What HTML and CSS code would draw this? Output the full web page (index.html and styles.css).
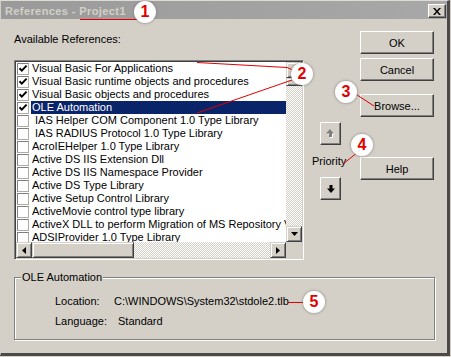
FILE: index.html
```html
<!DOCTYPE html>
<html>
<head>
<meta charset="utf-8">
<title>References - Project1</title>
<link rel="stylesheet" href="styles.css">
</head>
<body>
<div class="window">
  <div class="titlebar">
    <span class="title">References - Project1</span>
    <button class="close"><svg width="8" height="7" viewBox="0 0 8 7"><path d="M0 0h2l2 2.5 2-2.5h2l-3 3.5 3 3.5h-2l-2-2.5-2 2.5h-2l3-3.5z" fill="#000"/></svg></button>
  </div>
  <div class="main">
    <div class="leftcol">
      <div class="label">Available References:</div>
      <div class="listbox">
        <div class="listarea">
          <div class="items">
            <div class="row"><span class="cb"><svg width="10" height="10" viewBox="0 0 10 10"><path d="M1.5 4.2 L3.8 6.6 L8.6 1.6" fill="none" stroke="#000" stroke-width="2"/></svg></span><span class="txt">Visual Basic For Applications</span></div>
            <div class="row"><span class="cb"><svg width="10" height="10" viewBox="0 0 10 10"><path d="M1.5 4.2 L3.8 6.6 L8.6 1.6" fill="none" stroke="#000" stroke-width="2"/></svg></span><span class="txt">Visual Basic runtime objects and procedures</span></div>
            <div class="row"><span class="cb"><svg width="10" height="10" viewBox="0 0 10 10"><path d="M1.5 4.2 L3.8 6.6 L8.6 1.6" fill="none" stroke="#000" stroke-width="2"/></svg></span><span class="txt">Visual Basic objects and procedures</span></div>
            <div class="row"><span class="cb"><svg width="10" height="10" viewBox="0 0 10 10"><path d="M1.5 4.2 L3.8 6.6 L8.6 1.6" fill="none" stroke="#000" stroke-width="2"/></svg></span><span class="txt sel">OLE Automation</span></div>
            <div class="row"><span class="cb"></span><span class="txt sp">IAS Helper COM Component 1.0 Type Library</span></div>
            <div class="row"><span class="cb"></span><span class="txt sp">IAS RADIUS Protocol 1.0 Type Library</span></div>
            <div class="row"><span class="cb"></span><span class="txt">AcroIEHelper 1.0 Type Library</span></div>
            <div class="row"><span class="cb"></span><span class="txt">Active DS IIS Extension Dll</span></div>
            <div class="row"><span class="cb"></span><span class="txt">Active DS IIS Namespace Provider</span></div>
            <div class="row"><span class="cb"></span><span class="txt">Active DS Type Library</span></div>
            <div class="row"><span class="cb"></span><span class="txt">Active Setup Control Library</span></div>
            <div class="row"><span class="cb"></span><span class="txt">ActiveMovie control type library</span></div>
            <div class="row"><span class="cb"></span><span class="txt">ActiveX DLL to perform Migration of MS Repository V1</span></div>
            <div class="row"><span class="cb"></span><span class="txt">ADSIProvider 1.0 Type Library</span></div>
          </div>
          <div class="vscroll">
            <div class="sbtn"><svg width="7" height="4" viewBox="0 0 7 4"><path d="M3.5 0 L7 4 L0 4 Z" fill="#000"/></svg></div>
            <div class="thumb-v"></div>
            <div class="track"></div>
            <div class="sbtn"><svg width="7" height="4" viewBox="0 0 7 4"><path d="M0 0 L7 0 L3.5 4 Z" fill="#000"/></svg></div>
          </div>
        </div>
        <div class="hscroll">
          <div class="sbtn"><svg width="4" height="7" viewBox="0 0 4 7"><path d="M4 0 L4 7 L0 3.5 Z" fill="#000"/></svg></div>
          <div class="thumb-h"></div>
          <div class="track"></div>
          <div class="sbtn"><svg width="4" height="7" viewBox="0 0 4 7"><path d="M0 0 L4 3.5 L0 7 Z" fill="#000"/></svg></div>
          <div class="corner"></div>
        </div>
      </div>
    </div>
    <div class="midcol">
      <button class="pbtn up"><svg width="9" height="9" viewBox="0 0 9 9"><path d="M5 1 L9 5.5 L7 5.5 L7 9 L4 9 L4 5.5 L1 5.5 Z" fill="#fff"/><path d="M4 0 L8 4.5 L6 4.5 L6 8 L3 8 L3 4.5 L0 4.5 Z" fill="#808080"/></svg></button>
      <div class="priority">Priority</div>
      <button class="pbtn down"><svg width="8" height="8" viewBox="0 0 8 8"><path d="M2.5 0 L5.5 0 L5.5 3.5 L8 3.5 L4 8 L0 3.5 L2.5 3.5 Z" fill="#000"/></svg></button>
    </div>
    <div class="rightcol">
      <button class="btn ok">OK</button>
      <button class="btn cancel">Cancel</button>
      <button class="btn browse">Browse...</button>
      <button class="btn help">Help</button>
    </div>
  </div>
  <fieldset class="group">
    <legend>OLE Automation</legend>
    <div class="info">
      <span>Location:</span><span>C:\WINDOWS\System32\stdole2.tlb</span>
      <span>Language:</span><span class="std">Standard</span>
    </div>
  </fieldset>
</div>
<svg class="annot" width="451" height="357" viewBox="0 0 451 357">
  <g stroke="#e00000" stroke-width="1" fill="none">
    <path d="M80 19.5 H137"/>
    <path d="M197 62.5 L287 67.5 L293 70"/>
    <path d="M197 113 L292 80"/>
    <path d="M354 93 L374 106"/>
    <path d="M358 152 L343 164"/>
    <path d="M288 302.5 H304"/>
  </g>
</svg>
<div class="badge b1">1</div>
<div class="badge b2">2</div>
<div class="badge b3">3</div>
<div class="badge b4">4</div>
<div class="badge b5">5</div>
</body>
</html>
```

FILE: styles.css
```css
html, body {
  margin: 0;
  padding: 0;
}
body {
  background: #d4d0c8;
  font-family: "Liberation Sans", Arial, sans-serif;
  font-size: 11px;
  color: #000;
  width: 451px;
  height: 357px;
  overflow: hidden;
  position: relative;
}
.window {
  width: 450px;
  height: 356px;
  box-sizing: border-box;
  background: #d4d0c8;
  border-top: 1px solid #dedbd5;
  border-left: 1px solid #d4d0c8;
  border-right: 3px solid #4a4a4a;
  border-bottom: 3px solid #4a4a4a;
}
.titlebar {
  height: 18px;
  display: flex;
  justify-content: space-between;
  align-items: flex-start;
  background: linear-gradient(to right, #9a9a9a, #a8a8a8);
}
.title {
  font-weight: bold;
  color: #d4d0c8;
  line-height: 13px;
  letter-spacing: 0.4px;
  margin: 4px 0 0 4px;
}
.close {
  width: 18px;
  height: 14px;
  margin: 3px 1px 0 0;
  padding: 0;
  background: #d4d0c8;
  border: 1px solid;
  border-color: #fff #404040 #404040 #fff;
  box-shadow: inset -1px -1px 0 #808080;
  display: flex;
  align-items: center;
  justify-content: center;
}
.main {
  display: flex;
  padding-left: 13px;
}
.leftcol {
  width: 290px;
}
.label {
  line-height: 13px;
  margin-top: 14px;
}
.listbox {
  margin-top: 14px;
  width: 290px;
  height: 200px;
  box-sizing: border-box;
  border: 1px solid;
  border-color: #808080 #fff #fff #808080;
  box-shadow: inset 1px 1px 0 #404040, inset -1px -1px 0 #d4d0c8;
  padding: 1px;
  background: #fff;
  display: flex;
  flex-direction: column;
}
.listarea {
  display: flex;
  height: 180px;
}
.items {
  flex: 1;
  overflow: hidden;
}
.row {
  height: 13px;
  display: flex;
  align-items: center;
  white-space: nowrap;
}
.cb {
  width: 12px;
  height: 12px;
  box-sizing: border-box;
  margin-left: 1px;
  border: 1px solid;
  border-color: #808080 #b0aca4 #b0aca4 #808080;
  background: #fff;
  flex: none;
  display: flex;
  align-items: center;
  justify-content: center;
}
.txt {
  flex: 1;
  margin-left: 2px;
  padding-left: 1px;
  line-height: 13px;
}
.txt.sp {
  padding-left: 4px;
}
.txt.sel {
  background: #0a246a;
  color: #fff;
}
.vscroll {
  width: 16px;
  display: flex;
  flex-direction: column;
  flex: none;
}
.sbtn {
  width: 16px;
  height: 16px;
  box-sizing: border-box;
  flex: none;
  background: #d4d0c8;
  border: 1px solid;
  border-color: #d4d0c8 #404040 #404040 #d4d0c8;
  box-shadow: inset 1px 1px 0 #fff, inset -1px -1px 0 #808080;
  display: flex;
  align-items: center;
  justify-content: center;
}
.track {
  flex: 1;
  background: repeating-conic-gradient(#d4d0c8 0 25%, #fff 0 50%);
  background-size: 2px 2px;
}
.thumb-v {
  height: 8px;
  flex: none;
  box-sizing: border-box;
  background: #d4d0c8;
  border: 1px solid;
  border-color: #d4d0c8 #404040 #404040 #d4d0c8;
  box-shadow: inset 1px 1px 0 #fff, inset -1px -1px 0 #808080;
}
.hscroll {
  height: 16px;
  display: flex;
}
.thumb-h {
  width: 102px;
  flex: none;
  box-sizing: border-box;
  background: #d4d0c8;
  border: 1px solid;
  border-color: #d4d0c8 #404040 #404040 #d4d0c8;
  box-shadow: inset 1px 1px 0 #fff, inset -1px -1px 0 #808080;
}
.corner {
  width: 16px;
  flex: none;
  background: #d4d0c8;
}
.midcol {
  width: 40px;
  margin-left: 8px;
  display: flex;
  flex-direction: column;
}
.pbtn {
  width: 21px;
  height: 23px;
  margin-left: 8px;
  padding: 0;
  background: #d4d0c8;
  border: 1px solid;
  border-color: #fff #404040 #404040 #fff;
  box-shadow: inset -1px -1px 0 #808080;
  display: flex;
  align-items: center;
  justify-content: center;
}
.pbtn.up {
  margin-top: 103px;
}
.priority {
  line-height: 13px;
  margin-top: 10px;
}
.pbtn.down {
  margin-top: 9px;
}
.rightcol {
  margin-left: 8px;
  display: flex;
  flex-direction: column;
}
.btn {
  width: 74px;
  height: 23px;
  padding: 0;
  background: #d4d0c8;
  font-family: "Liberation Sans", Arial, sans-serif;
  font-size: 11px;
  color: #000;
  border: 1px solid;
  border-color: #fff #404040 #404040 #fff;
  box-shadow: inset -1px -1px 0 #808080;
}
.ok { margin-top: 12px; }
.cancel { margin-top: 4px; }
.browse { margin-top: 13px; }
.help { margin-top: 40px; }
.group {
  margin: 11px 0 0 13px;
  width: 421px;
  box-sizing: border-box;
  border: 1px solid #808080;
  box-shadow: 1px 1px 0 #fff, inset 1px 1px 0 #fff;
  padding: 10px 0 11px 0;
  min-width: 0;
}
.group legend {
  margin-left: 6px;
  padding: 0 1px;
  line-height: 13px;
  background: #d4d0c8;
}
.info {
  margin-left: 40px;
  display: grid;
  grid-template-columns: 59px auto;
  row-gap: 6px;
  line-height: 14px;
}
.std {
  padding-left: 4px;
}
.annot {
  position: absolute;
  left: 0;
  top: 0;
  pointer-events: none;
}
.badge {
  position: absolute;
  width: 22px;
  height: 22px;
  border-radius: 50%;
  background: radial-gradient(circle, #fff 0 62%, #f2f2f2 78%, #dcdcdc 100%);
  box-shadow: 0 0 2px 1px rgba(120, 120, 120, 0.45);
  color: #e00000;
  font-family: "Liberation Sans", Arial, sans-serif;
  font-weight: bold;
  font-size: 16px;
  line-height: 22px;
  text-align: center;
}
.b1 { left: 134px; top: 1px; }
.b2 { left: 291px; top: 63px; }
.b3 { left: 335px; top: 81px; }
.b4 { left: 351px; top: 134px; }
.b5 { left: 303px; top: 291px; }
```
